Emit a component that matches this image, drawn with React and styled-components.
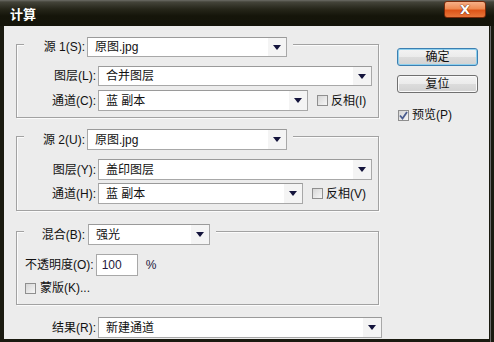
import React from 'react'
import styled, { createGlobalStyle } from 'styled-components'

const GlobalStyle = createGlobalStyle`
  html, body {
    margin: 0;
    padding: 0;
    background: #1a1a10;
  }
  body {
    font-family: "Liberation Sans", "Noto Sans CJK SC", sans-serif;
    font-size: 12px;
    color: #111;
  }
`;

export default function App() {
  return (
    <>
      <GlobalStyle />
      <Window>
        <TitleBar>
          <Title>计算</Title>
          <CloseButton>X</CloseButton>
        </TitleBar>
        <Body>
          <LeftColumn>
            <Group>
              <GroupHeader>
                <HeaderLabel>源 1(S):</HeaderLabel>
                <Select value="原图.jpg" width={200} />
              </GroupHeader>
              <Row $top={9}>
                <RowLabel>图层(L):</RowLabel>
                <Select value="合并图层" width={274} />
              </Row>
              <Row $top={4}>
                <RowLabel>通道(C):</RowLabel>
                <Select value="蓝 副本" width={210} height={21} />
                <CheckField $left={9}>
                  <Checkbox />
                  <span>反相(I)</span>
                </CheckField>
              </Row>
            </Group>

            <Group $top={18}>
              <GroupHeader>
                <HeaderLabel>源 2(U):</HeaderLabel>
                <Select value="原图.jpg" width={200} height={21} />
              </GroupHeader>
              <Row $top={9}>
                <RowLabel>图层(Y):</RowLabel>
                <Select value="盖印图层" width={274} height={21} />
              </Row>
              <Row $top={3}>
                <RowLabel>通道(H):</RowLabel>
                <Select value="蓝 副本" width={205} height={21} />
                <CheckField $left={9}>
                  <Checkbox />
                  <span>反相(V)</span>
                </CheckField>
              </Row>
            </Group>

            <Group $top={20} $bottom={9}>
              <GroupHeader>
                <HeaderLabel>混合(B):</HeaderLabel>
                <Select value="强光" width={122} height={21} $gap={3} />
              </GroupHeader>
              <OpacityRow>
                <span>不透明度(O):</span>
                <NumberBox>100</NumberBox>
                <Percent>%</Percent>
              </OpacityRow>
              <MaskRow>
                <Checkbox />
                <span>蒙版(K)...</span>
              </MaskRow>
            </Group>

            <ResultRow>
              <RowLabel>结果(R):</RowLabel>
              <Select value="新建通道" width={284} height={21} />
            </ResultRow>
          </LeftColumn>

          <RightColumn>
            <Button $primary>确定</Button>
            <Button>复位</Button>
            <PreviewField>
              <Checkbox checked />
              <span>预览(P)</span>
            </PreviewField>
          </RightColumn>
        </Body>
      </Window>
    </>
  )
}

function Select({ value, width, height = 20, $gap }) {
  return (
    <SelectBox $width={width} $height={height} $gap={$gap}>
      <SelectValue>{value}</SelectValue>
      <ArrowBox>
        <svg width="8" height="5" viewBox="0 0 8 5">
          <polygon points="0,0 8,0 4,5" fill="#14143c" />
        </svg>
      </ArrowBox>
    </SelectBox>
  )
}

function Checkbox({ checked }) {
  return (
    <CheckBox>
      {checked && (
        <svg width="9" height="9" viewBox="0 0 9 9">
          <path d="M1 4.5 L3.5 7.5 L8 1" fill="none" stroke="#4b5d8f" strokeWidth="1.8" />
        </svg>
      )}
    </CheckBox>
  )
}

const Window = styled.div`
  width: 494px;
  height: 342px;
  display: flex;
  flex-direction: column;
  background: #1a1a10;
  box-shadow: inset -3px 0 0 #1a1a10, inset -4px 0 0 #6a6a6a;
`;

const TitleBar = styled.div`
  height: 26px;
  flex: none;
  display: flex;
  align-items: flex-start;
  background: linear-gradient(#6c6c66 0, #44443a 2px, #26261a 9px, #15150a 16px, #14140a 26px);
`;

const Title = styled.div`
  padding: 7px 0 0 10px;
  color: #fff;
  font-weight: bold;
  font-size: 13px;
  line-height: 14px;
  font-family: "Noto Sans CJK SC", sans-serif;
`;

const CloseButton = styled.div`
  margin: 1px 8px 0 auto;
  width: 42px;
  height: 17px;
  box-sizing: border-box;
  border: 1px solid #7a2a0a;
  border-radius: 3px;
  background: linear-gradient(#f6b088 0, #ee8a52 45%, #dc5418 55%, #e8763a 100%);
  color: #fff;
  font-weight: bold;
  font-size: 13px;
  line-height: 15px;
  text-align: center;
  text-shadow: 0 0 1px #5a1a00, 0 0 1px #5a1a00;
  font-family: "DejaVu Sans", sans-serif;
`;

const Body = styled.div`
  flex: 1;
  margin: 0 5px 3px 4px;
  background: #ececec;
  display: flex;
  align-items: flex-start;
  padding: 18px 0 0 12px;
`;

const LeftColumn = styled.div`
  width: 366px;
  display: flex;
  flex-direction: column;
`;

const RightColumn = styled.div`
  margin-left: 15px;
  padding-top: 4px;
  display: flex;
  flex-direction: column;
`;

const Group = styled.div`
  width: 363px;
  box-sizing: border-box;
  margin-top: ${p => p.$top || 0}px;
  padding-bottom: ${p => p.$bottom || 6}px;
  border: 1px solid #a2a2a2;
  box-shadow: inset 1px 1px 0 #fbfbfb, 1px 1px 0 #fbfbfb;
  display: flex;
  flex-direction: column;
`;

const GroupHeader = styled.div`
  margin: -8px 0 0 7px;
  padding: 0 6px 0 5px;
  align-self: flex-start;
  display: flex;
  align-items: center;
  background: #ececec;
`;

const HeaderLabel = styled.span`
  width: 56px;
  text-align: right;
  line-height: 14px;
`;

const Row = styled.div`
  margin-top: ${p => p.$top}px;
  padding-left: 9px;
  display: flex;
  align-items: center;
`;

const RowLabel = styled.span`
  width: 70px;
  text-align: right;
  line-height: 14px;
`;

const SelectBox = styled.div`
  margin-left: ${p => (p.$gap != null ? p.$gap : 2)}px;
  width: ${p => p.$width}px;
  height: ${p => p.$height}px;
  box-sizing: border-box;
  border: 1px solid #a8a8a8;
  border-top-color: #9a9a9a;
  background: #fff;
  display: flex;
  align-items: stretch;
`;

const SelectValue = styled.span`
  flex: 1;
  padding-left: 7px;
  display: flex;
  align-items: center;
  line-height: 14px;
  white-space: nowrap;
`;

const ArrowBox = styled.span`
  width: 18px;
  background: #f4f4f4;
  display: flex;
  align-items: center;
  justify-content: center;
`;

const CheckField = styled.label`
  margin-left: ${p => p.$left}px;
  display: flex;
  align-items: center;
  gap: 3px;
  line-height: 14px;
`;

const CheckBox = styled.span`
  width: 11px;
  height: 11px;
  box-sizing: border-box;
  border: 1px solid #8f8f8f;
  background: linear-gradient(135deg, #d6d6d6, #f6f6f6);
  display: flex;
  align-items: center;
  justify-content: center;
`;

const OpacityRow = styled.div`
  margin-top: 9px;
  padding-left: 8px;
  display: flex;
  align-items: center;
  line-height: 14px;
`;

const NumberBox = styled.div`
  margin-left: 2px;
  width: 42px;
  height: 22px;
  box-sizing: border-box;
  border: 1px solid #a8a8a8;
  background: #fff;
  padding-left: 5px;
  display: flex;
  align-items: center;
  color: #24183c;
`;

const Percent = styled.span`
  margin-left: 8px;
  color: #24183c;
`;

const MaskRow = styled.label`
  margin-top: 5px;
  padding-left: 8px;
  display: flex;
  align-items: center;
  gap: 4px;
  line-height: 14px;
`;

const ResultRow = styled.div`
  margin-top: 12px;
  padding-left: 10px;
  display: flex;
  align-items: center;
`;

const Button = styled.div`
  width: 81px;
  height: 18px;
  box-sizing: border-box;
  margin-bottom: 9px;
  border: 1px solid ${p => (p.$primary ? '#3c7fb1' : '#707070')};
  border-radius: 3px;
  background: linear-gradient(#f3f3f3 0, #ebebeb 50%, #dcdcdc 51%, #d2d2d2 100%);
  box-shadow: ${p => (p.$primary ? 'inset 0 0 0 1px #8ed0ee' : 'inset 0 0 0 1px #fafafa')};
  display: flex;
  align-items: center;
  justify-content: center;
  line-height: 14px;
`;

const PreviewField = styled.label`
  margin: 6px 0 0 1px;
  display: flex;
  align-items: center;
  gap: 3px;
  line-height: 14px;
`;
